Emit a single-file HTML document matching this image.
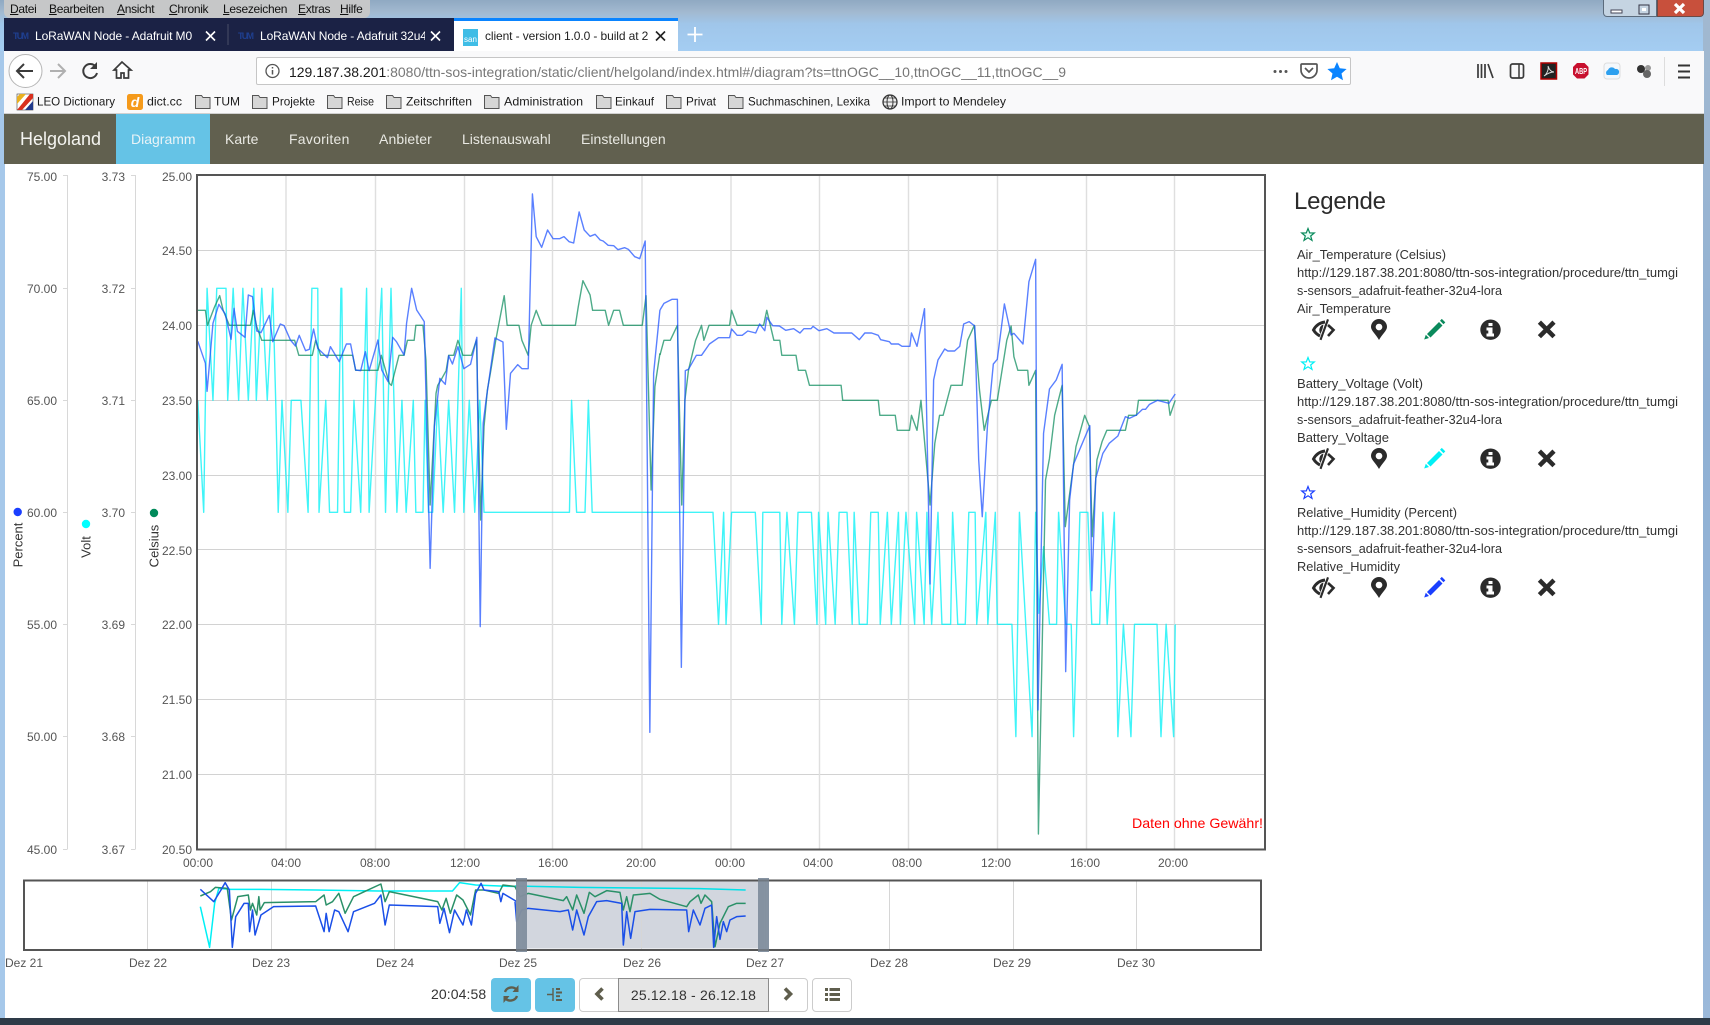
<!DOCTYPE html>
<html lang="de"><head><meta charset="utf-8"><title>client - version 1.0.0</title>
<style>
html,body{margin:0;padding:0;width:1710px;height:1025px;overflow:hidden;background:#a6cdf1;font-family:"Liberation Sans",sans-serif}
.a{position:absolute;white-space:nowrap}
#bg{left:0;top:0;width:1710px;height:51px;background:linear-gradient(180deg,#8fa9c2 0,#a2b9d0 12px,#a0c6ea 24px,#a4cdf2 51px)}
#menu{left:4px;top:0;width:366px;height:18px;background:#c6c7c8;border-radius:0 0 6px 6px}
.m{top:1px;font-size:12px;line-height:16px;color:#111;letter-spacing:-.3px}
.m u{text-decoration:underline}
#tabs{left:4px;top:18px;width:450px;height:33px;background:#1b2245}
#tabact{left:454px;top:18px;width:224px;height:33px;background:#fff;border-top:3px solid #0a84ff;box-sizing:border-box}
.t{top:28px;font-size:12px;line-height:16px;color:#fff;overflow:hidden;letter-spacing:-.1px}
#tool{left:4px;top:51px;width:1700px;height:62px;background:#f9f9fa}
#url{left:256px;top:57px;width:1095px;height:28px;background:#fff;border:1px solid #c6c6c6;border-radius:2px;box-sizing:border-box}
#nav{left:4px;top:114px;width:1700px;height:50px;background:#61604f}
.n{top:129px;font-size:14px;line-height:20px;color:#e9e9e3}
#page{left:5px;top:164px;width:1698px;height:854px;background:#fff}
#rs{left:1703px;top:0;width:7px;height:1025px;background:linear-gradient(180deg,#a2b9d0 0,#8fb0d4 40%,#9bb9da 100%)}
#ls{left:0;top:51px;width:5px;height:974px;background:#a6c8ea}
#bot{left:0;top:1018px;width:1710px;height:7px;background:#2e3b48}
.btn{height:34px;box-sizing:border-box;border-radius:4px}
svg{position:absolute;left:0;top:0}
</style></head><body>
<div class="a" id="bg"></div>
<div class="a" id="rs"></div><div class="a" id="ls"></div>
<div class="a" id="menu"></div>
<span class="a m" style="left:10px"><u>D</u>atei</span>
<span class="a m" style="left:49px"><u>B</u>earbeiten</span>
<span class="a m" style="left:117px"><u>A</u>nsicht</span>
<span class="a m" style="left:169px"><u>C</u>hronik</span>
<span class="a m" style="left:223px"><u>L</u>esezeichen</span>
<span class="a m" style="left:298px"><u>E</u>xtras</span>
<span class="a m" style="left:340px"><u>H</u>ilfe</span>
<div class="a" style="left:1603px;top:0;width:54px;height:17px;background:#c5d4e2;border:1px solid #5b6b7c;border-top:0;box-sizing:border-box;border-radius:0 0 0 4px"></div>
<div class="a" style="left:1657px;top:0;width:47px;height:17px;background:#c8503c;border:1px solid #6b4a46;border-top:0;box-sizing:border-box;border-radius:0 0 4px 0"></div>
<div class="a" id="tabs"></div>
<div class="a" id="tabact"></div>
<div class="a t" style="left:35px;width:162px">LoRaWAN Node - Adafruit M0</div>
<div class="a t" style="left:260px;width:165px">LoRaWAN Node - Adafruit 32u4</div>
<div class="a t" style="left:485px;width:165px;color:#222">client - version 1.0.0 - build at 2</div>
<div class="a" id="tool"></div>
<div class="a" id="url"></div>
<div class="a" style="left:4px;top:113px;width:1700px;height:1px;background:#d0d0d0"></div>
<div class="a" id="nav"></div>
<div class="a" style="left:116px;top:114px;width:94px;height:50px;background:#65c3e6"></div>
<a class="a" style="left:20px;top:128px;font-size:18px;line-height:22px;color:#f4f4f0">Helgoland</a>
<a class="a n" style="left:131px;color:#e8f3f7">Diagramm</a>
<a class="a n" style="left:225px">Karte</a>
<a class="a n" style="left:289px;letter-spacing:.25px">Favoriten</a>
<a class="a n" style="left:379px;letter-spacing:.1px">Anbieter</a>
<a class="a n" style="left:462px">Listenauswahl</a>
<a class="a n" style="left:581px;letter-spacing:.05px">Einstellungen</a>
<div class="a" id="page"></div>
<div class="a" id="bot"></div>
<div class="a" style="left:431px;top:985px;font-size:14px;line-height:18px;color:#333;letter-spacing:.1px">20:04:58</div>
<div class="a btn" style="left:491px;top:978px;width:40px;background:#65c3e6"></div>
<div class="a btn" style="left:535px;top:978px;width:40px;background:#65c3e6"></div>
<div class="a btn" style="left:579px;top:978px;width:229px;background:#fff;border:1px solid #ccc"></div>
<div class="a" style="left:618px;top:978px;width:151px;height:34px;box-sizing:border-box;background:#e6e6e6;border:1px solid #8c8c8c;text-align:center;font-size:14px;line-height:32px;color:#333;letter-spacing:.2px">25.12.18 - 26.12.18</div>
<div class="a btn" style="left:812px;top:978px;width:40px;background:#fff;border:1px solid #ccc"></div>

<svg width="1710" height="1025" viewBox="0 0 1710 1025" font-family="Liberation Sans, sans-serif">
<defs><clipPath id="cp"><rect x="198" y="176" width="1066" height="673"/></clipPath></defs>
<!-- window buttons -->
<rect x="1611" y="10" width="11" height="3" fill="#fff" stroke="#445"/><rect x="1639" y="5" width="10" height="9" fill="none" stroke="#334"/><rect x="1642" y="8" width="4" height="3" fill="#fff"/>
<path d="M1675 4l9 9M1684 4l-9 9" stroke="#fff" stroke-width="3.2"/>
<!-- tab favicons and closes -->
<text x="13" y="39" font-size="9" font-weight="bold" fill="#1f3f8f" textLength="16">TUM</text>
<text x="238" y="39" font-size="9" font-weight="bold" fill="#1f3f8f" textLength="16">TUM</text>
<rect x="463" y="29" width="15" height="17" fill="#3fbde6"/><text x="464" y="42" font-size="8" fill="#fff">san</text>
<path d="M206 31.500l9 9M215 31.500l-9 9M431 31.500l9 9M440 31.500l-9 9" stroke="#fff" stroke-width="1.6" fill="none"/>
<path d="M656 31.500l9 9M665 31.500l-9 9" stroke="#222" stroke-width="1.6" fill="none"/>
<path d="M228 24v21" stroke="#4a4f68"/>
<path d="M695 27v15M687.500 34.500h15" stroke="#fff" stroke-width="1.800"/>
<!-- toolbar left -->
<circle cx="25.500" cy="71" r="16.500" fill="#fff" stroke="#b5b5b5"/>
<path d="M33 71H18M24 64l-7 7 7 7" fill="none" stroke="#3b3b3b" stroke-width="2"/>
<path d="M65 71H50M58 64l7 7-7 7" fill="none" stroke="#b0b0b0" stroke-width="2"/>
<path d="M96 67a7 7 0 1 0 1 6" fill="none" stroke="#3b3b3b" stroke-width="2"/><path d="M97 62v7h-7z" fill="#3b3b3b"/>
<path d="M122 62l-8 8h2.500v8h4.500v-5h3v5h4.500v-8h2.500z" fill="#fff" stroke="#3b3b3b" stroke-width="1.700"/>
<circle cx="272.500" cy="71" r="6.500" fill="none" stroke="#555" stroke-width="1.300"/><path d="M272.500 70v4.500M272.500 67v1.500" stroke="#555" stroke-width="1.500"/>
<text x="289" y="77" font-size="14" textLength="777" lengthAdjust="spacingAndGlyphs" fill="#777"><tspan fill="#1a1a1a">129.187.38.201</tspan>:8080/ttn-sos-integration/static/client/helgoland/index.html#/diagram?ts=ttnOGC__10,ttnOGC__11,ttnOGC__9</text>
<circle cx="1275" cy="71.500" r="1.500" fill="#555"/><circle cx="1280.500" cy="71.500" r="1.500" fill="#555"/><circle cx="1286" cy="71.500" r="1.500" fill="#555"/>
<path d="M1302 64h14a1 1 0 0 1 1 1v5a8 8 0 0 1-16 0v-5a1 1 0 0 1 1-1z" fill="none" stroke="#555" stroke-width="1.700"/><path d="M1305 68l4 4 4-4" fill="none" stroke="#555" stroke-width="1.700"/>
<path d="M1337 62l2.800 6.300 6.800.7-5.100 4.500 1.500 6.700-6-3.500-6 3.500 1.500-6.700-5.100-4.500 6.800-.7z" fill="#0a84ff"/>
<!-- toolbar right -->
<path d="M1478 64v14M1481.500 64v14M1485 64v14M1488 64l5 14" stroke="#3b3b3b" stroke-width="1.700" fill="none"/>
<rect x="1510.500" y="64" width="13" height="14" rx="2" fill="none" stroke="#3b3b3b" stroke-width="1.700"/><path d="M1519 64v14" stroke="#3b3b3b" stroke-width="1.500"/>
<rect x="1541" y="63" width="15.500" height="16" fill="#222" stroke="#b00000" stroke-width="1.500"/><path d="M1544 76c3-2 5-7 4-10 1 3 3 6 6 6-3 0-6 1-10 4z" fill="none" stroke="#ddd" stroke-width="1"/>
<path d="M1577 63h7.500l4 4v7.500l-4 4H1577l-4-4V67z" fill="#c8102e"/><text x="1581" y="74" font-size="8" font-weight="bold" fill="#fff" text-anchor="middle" textLength="12" lengthAdjust="spacingAndGlyphs">ABP</text>
<rect x="1604" y="63" width="16" height="16" rx="3" fill="#f4f8fc" stroke="#ddd"/><path d="M1607 75a3 3 0 0 1 1-5 4 4 0 0 1 7-1 3 3 0 0 1 2 6z" fill="#2da0ef"/>
<circle cx="1641" cy="69" r="4" fill="#333"/><circle cx="1648" cy="68" r="3" fill="#999"/><circle cx="1647" cy="74" r="4" fill="#666"/>
<path d="M1664.500 57v29" stroke="#ddd"/>
<path d="M1678 65.500h12M1678 71.500h12M1678 77.500h12" stroke="#333" stroke-width="2"/>
<!-- bookmarks -->
<rect x="17" y="94" width="16" height="16" fill="#fff" stroke="#444" stroke-width=".6"/><path d="M17 110L30 94h3v4L22 110z" fill="#d9301f"/><path d="M25 110l8-9v9z" fill="#223a8c"/><path d="M20 94h6l-9 10v-7z" fill="#e9b020"/>
<g font-size="12" fill="#1c1c1c" lengthAdjust="spacingAndGlyphs">
<text x="37" y="105.500" textLength="78" lengthAdjust="spacingAndGlyphs">LEO Dictionary</text>
<text x="147" y="105.500" textLength="35" lengthAdjust="spacingAndGlyphs">dict.cc</text>
<text x="214" y="105.500" textLength="26" lengthAdjust="spacingAndGlyphs">TUM</text>
<text x="272" y="105.500" textLength="43" lengthAdjust="spacingAndGlyphs">Projekte</text>
<text x="347" y="105.500" textLength="27" lengthAdjust="spacingAndGlyphs">Reise</text>
<text x="406" y="105.500" textLength="66" lengthAdjust="spacingAndGlyphs">Zeitschriften</text>
<text x="504" y="105.500" textLength="79" lengthAdjust="spacingAndGlyphs">Administration</text>
<text x="615" y="105.500" textLength="39" lengthAdjust="spacingAndGlyphs">Einkauf</text>
<text x="686" y="105.500" textLength="30" lengthAdjust="spacingAndGlyphs">Privat</text>
<text x="748" y="105.500" textLength="122" lengthAdjust="spacingAndGlyphs">Suchmaschinen, Lexika</text>
<text x="901" y="105.500" textLength="105" lengthAdjust="spacingAndGlyphs">Import to Mendeley</text>
</g>
<rect x="127" y="94" width="16" height="16" rx="2.500" fill="#f59a1b"/><text x="135" y="107" font-size="14" font-weight="bold" font-style="italic" fill="#fff" text-anchor="middle">d</text>
<g fill="#d6d6d6" stroke="#555">
<path d="M195.500 95.500h6l1.500 2h7v11h-14.500z"/>
<path d="M252.500 95.500h6l1.500 2h7v11h-14.500z"/>
<path d="M327.500 95.500h6l1.500 2h7v11h-14.500z"/>
<path d="M386.500 95.500h6l1.500 2h7v11h-14.500z"/>
<path d="M484.500 95.500h6l1.500 2h7v11h-14.500z"/>
<path d="M596.500 95.500h6l1.500 2h7v11h-14.500z"/>
<path d="M666.500 95.500h6l1.500 2h7v11h-14.500z"/>
<path d="M728.500 95.500h6l1.500 2h7v11h-14.500z"/>
</g>
<circle cx="890" cy="102" r="7" fill="#eee" stroke="#333" stroke-width="1.300"/><ellipse cx="890" cy="102" rx="3" ry="7" fill="none" stroke="#333"/><path d="M883 102h14M884 98h12M884 106h12" stroke="#333" stroke-width=".8"/>

<!-- axes -->
<g stroke="#d8d8d8" fill="none">
<path d="M67.500 175v674M63 175.500h4.500M63 288.500h4.500M63 400.500h4.500M63 512.500h4.500M63 624.500h4.500M63 736.500h4.500M63 849.500h4.500"/>
<path d="M135.500 175v674M131 175.500h4.500M131 288.500h4.500M131 400.500h4.500M131 512.500h4.500M131 624.500h4.500M131 736.500h4.500M131 849.500h4.500"/>
</g>
<g font-size="12" fill="#555" text-anchor="end">
<text x="57" y="181">75.00</text><text x="57" y="293">70.00</text><text x="57" y="405">65.00</text><text x="57" y="517">60.00</text><text x="57" y="629">55.00</text><text x="57" y="741">50.00</text><text x="57" y="854">45.00</text>
<text x="125" y="181">3.73</text><text x="125" y="293">3.72</text><text x="125" y="405">3.71</text><text x="125" y="517">3.70</text><text x="125" y="629">3.69</text><text x="125" y="741">3.68</text><text x="125" y="854">3.67</text>
<text x="192" y="181">25.00</text><text x="192" y="255">24.50</text><text x="192" y="330">24.00</text><text x="192" y="405">23.50</text><text x="192" y="480">23.00</text><text x="192" y="555">22.50</text><text x="192" y="629">22.00</text><text x="192" y="704">21.50</text><text x="192" y="779">21.00</text><text x="192" y="854">20.50</text>
</g>
<circle cx="17.700" cy="512" r="4.200" fill="#1a3fff"/><circle cx="86" cy="524" r="4.200" fill="#00ffff"/><circle cx="154" cy="513" r="4.200" fill="#008a5a"/>
<g font-size="13" fill="#333" text-anchor="middle">
<text transform="translate(22.500,545) rotate(-90)">Percent</text>
<text transform="translate(90.500,547) rotate(-90)">Volt</text>
<text transform="translate(158.500,546) rotate(-90)">Celsius</text>
</g>
<!-- main chart grid -->
<g stroke="#d2d2d2" fill="none">
<path d="M198 250.500h1066M198 325.500h1066M198 400.500h1066M198 475.500h1066M198 549.500h1066M198 624.500h1066M198 699.500h1066M198 774.500h1066"/>
</g>
<g stroke="#dfdfdf" stroke-width="1.400" fill="none">
<path d="M286 176v673M375.500 176v673M464.500 176v673M552.500 176v673M642 176v673M731 176v673M819.500 176v673M908.500 176v673M997.500 176v673M1086.500 176v673M1174.500 176v673"/>
</g>
<g clip-path="url(#cp)" fill="none" stroke-width="1.400" stroke-linejoin="round">
<g transform="translate(0,160) scale(.42088,.33333)" stroke="#00f0f5" stroke-opacity=".75">
<polyline vector-effect="non-scaling-stroke" points="470,721 484,1057 492,385 506,721 515,385 537,385 541,721 554,385 567,721 577,385 590,721 603,385 609,721 622,385 635,721 648,385 655,721 661,1057 670,721 684,1057 692,721 715,721 732,1057 741,385 755,385 758,1057 774,721 783,1057 802,1057 810,385 812,385 818,1057 833,1057 841,721 857,1057 871,385 877,1057 907,385 916,1057 929,385 943,1057 955,721 965,1057 982,721 988,1057 1005,1057 1010,721 1018,1057 1028,1057 1040,721 1053,1057 1066,721 1080,1057 1096,385 1102,1057 1115,721 1128,1057 1140,721 1150,1057 1353,1057 1358,721 1370,1057 1390,1057 1398,721 1407,1057 1568,1057"/>
</g>
<g transform="translate(660,160) scale(.39541,.33333)" stroke="#00f0f5" stroke-opacity=".75">
<polyline vector-effect="non-scaling-stroke" points="0,1057 134,1057 148,1393 161,1057 167,1393 181,1057 241,1057 256,1393 260,1057 303,1057 308,1393 321,1057 340,1393 349,1057 383,1057 397,1393 401,1057 419,1393 425,1057 443,1393 453,1057 473,1057 486,1393 491,1057 504,1393 524,1393 533,1057 552,1057 557,1393 575,1057 585,1393 603,1057 608,1393 622,1057 644,1393 649,1057 668,1393 675,1057 687,1393 703,1057 713,1393 735,1393 740,1057 753,1393 772,1393 781,1057 797,1057 801,1393 824,1057 829,1393 848,1057 853,1393 890,1393 900,1730 909,1057 941,1730 950,1057 958,1360 970,1160 985,1393 1003,1393 1008,1057 1026,1393 1040,1393 1046,1730 1062,1057 1082,1057 1092,1393 1112,1393 1120,1057 1131,1393 1149,1057 1158,1730 1172,1393 1191,1730 1200,1393 1257,1393 1267,1730 1280,1393 1299,1730 1303,1393"/>
</g>
<g transform="translate(0,160) scale(.42088,.33333)" stroke="#0a8a5c" stroke-opacity=".72">
<polyline vector-effect="non-scaling-stroke" points="470,451 488,451 493,496 510,440 522,407 530,450 545,496 552,496 595,496 602,451 610,500 622,541 700,541 710,586 742,586 750,541 762,586 838,586 845,631 898,631 906,586 925,670 930,676 948,586 960,586 968,541 984,541 988,496 1005,496 1012,600 1022,1035 1036,700 1040,676 1050,655 1060,632 1066,586 1078,586 1088,541 1100,586 1120,586 1132,540 1142,1080 1150,800 1158,690 1165,640 1178,540 1198,407 1205,496 1233,496 1240,541 1255,586 1262,496 1274,451 1288,496 1367,496 1374,440 1385,362 1402,405 1408,451 1438,451 1446,496 1458,451 1472,451 1481,496 1526,496 1535,407 1547,990 1556,680 1568,580"/>
</g>
<g transform="translate(660,160) scale(.39541,.33333)" stroke="#0a8a5c" stroke-opacity=".72">
<polyline vector-effect="non-scaling-stroke" points="0,585 10,541 26,541 44,496 55,1035 63,720 72,631 90,541 105,496 111,541 124,496 176,496 181,451 195,496 262,496 270,451 288,541 303,541 308,586 344,586 350,631 368,631 378,676 458,676 462,721 552,721 556,766 595,766 600,811 631,811 636,766 650,811 660,721 683,1035 695,850 707,766 716,766 736,676 764,676 778,541 795,496 808,690 820,811 838,721 853,721 877,541 888,498 895,590 905,631 930,631 933,676 950,631 957,2022 975,960 985,895 998,766 1017,676 1025,1100 1035,1010 1052,860 1074,766 1086,800 1093,1130 1105,900 1118,845 1130,811 1177,811 1185,766 1205,766 1210,721 1285,721 1290,766 1303,721"/>
</g>
<g transform="translate(0,160) scale(.42088,.33333)" stroke="#1a4fff" stroke-opacity=".72">
<polyline vector-effect="non-scaling-stroke" points="470,544 488,610 492,694 506,490 520,433 535,462 549,538 556,445 564,514 582,532 590,405 600,410 610,513 620,518 640,466 648,545 666,492 675,497 690,540 702,558 711,526 726,572 735,568 745,507 755,565 778,593 785,560 806,605 823,552 833,552 845,630 857,632 868,575 877,632 898,540 907,630 922,665 933,532 942,545 960,585 966,490 978,385 990,450 1008,485 1012,700 1022,1225 1032,800 1045,655 1058,673 1066,587 1075,612 1088,560 1102,626 1118,613 1133,532 1141,1400 1148,790 1155,720 1176,534 1195,546 1203,808 1213,640 1230,614 1240,626 1255,626 1265,102 1274,230 1287,262 1301,210 1314,236 1330,236 1340,230 1352,245 1363,249 1376,156 1388,210 1402,229 1414,223 1426,240 1433,243 1445,256 1458,257 1468,269 1484,263 1493,268 1508,290 1520,296 1533,243 1544,1717 1553,640 1568,450"/>
</g>
<g transform="translate(660,160) scale(.39541,.33333)" stroke="#1a4fff" stroke-opacity=".72">
<polyline vector-effect="non-scaling-stroke" points="0,450 10,430 30,418 44,418 54,1522 64,632 72,628 92,586 105,586 125,552 148,533 176,533 181,507 195,526 208,526 222,513 242,519 252,492 265,512 270,472 285,497 302,498 318,511 338,506 354,519 364,506 382,506 387,499 402,512 422,506 440,519 485,519 504,539 518,519 535,519 552,526 558,539 580,545 585,552 603,552 612,559 632,559 636,519 650,559 669,446 683,1272 692,660 703,600 720,567 728,573 745,573 758,559 768,492 782,485 796,498 806,900 815,1070 828,800 843,612 853,598 871,432 888,525 895,520 918,552 933,365 950,298 956,1650 970,820 985,687 1002,660 1017,613 1026,1535 1036,1020 1046,912 1052,895 1087,797 1092,1292 1102,955 1120,880 1136,850 1158,828 1177,770 1187,775 1205,765 1220,748 1228,748 1238,733 1258,721 1287,730 1303,702"/>
</g>
</g>
<rect x="197" y="175" width="1068" height="674.500" fill="none" stroke="#555" stroke-width="2"/>
<text x="1263" y="828" font-size="14" fill="#f00" text-anchor="end" textLength="131" lengthAdjust="spacingAndGlyphs">Daten ohne Gewähr!</text>
<g font-size="12" fill="#555" text-anchor="middle">
<text x="198" y="867">00:00</text><text x="286" y="867">04:00</text><text x="375" y="867">08:00</text><text x="465" y="867">12:00</text><text x="553" y="867">16:00</text><text x="641" y="867">20:00</text><text x="730" y="867">00:00</text><text x="818" y="867">04:00</text><text x="907" y="867">08:00</text><text x="996" y="867">12:00</text><text x="1085" y="867">16:00</text><text x="1173" y="867">20:00</text>
</g>
<!-- overview -->
<rect x="522" y="881" width="242" height="67.500" fill="#d2d6de"/>
<path d="M147.500 881v68M271.500 881v68M394.500 881v68M518.500 881v68M641.500 881v68M765.500 881v68M889.500 881v68M1013.500 881v68M1136.500 881v68" stroke="#d6d6d6" fill="none"/>
<g fill="none" stroke-width="1.500" stroke-linejoin="round">
<g transform="translate(0,860) scale(.42088,.33333)">
<polyline vector-effect="non-scaling-stroke" stroke="#00f0f5" points="476,140 498,262 510,130 520,85 548,88 620,88 750,90 900,93 1075,93 1092,68 1130,75 1228,80"/>
<polyline vector-effect="non-scaling-stroke" stroke="#2a9068" points="476,108 500,95 512,82 540,85 550,180 565,110 590,105 595,150 600,130 610,165 615,110 618,150 628,128 750,125 770,105 775,135 790,125 805,100 820,160 840,110 905,72 915,125 925,95 1040,125 1050,150 1060,115 1070,160 1085,105 1100,120 1118,165 1130,90 1150,90 1185,100 1195,75 1228,80"/>
<polyline vector-effect="non-scaling-stroke" stroke="#1a4fe8" points="476,88 508,125 525,90 535,68 545,90 552,262 560,170 580,130 590,130 593,215 600,150 606,225 620,165 650,140 750,138 770,215 775,160 782,215 795,150 805,155 827,215 840,155 890,130 905,105 915,195 925,135 1040,140 1045,190 1055,145 1068,218 1080,150 1100,195 1108,150 1120,195 1130,100 1143,70 1150,90 1185,95 1190,125 1195,100 1228,125"/>
</g>
<g transform="translate(400,860) scale(.33333,.33333)">
<polyline vector-effect="non-scaling-stroke" stroke="#00e0e8" points="345,78 540,82 720,84 900,86 1037,90"/>
<polyline vector-effect="non-scaling-stroke" stroke="#2a9068" points="345,80 360,110 385,100 490,122 500,110 518,150 530,105 552,160 568,97 585,110 620,92 660,97 670,150 680,110 690,155 700,105 750,100 780,118 860,140 870,125 895,105 903,130 915,105 935,125 945,260 960,190 975,160 985,140 1010,130 1037,130"/>
<polyline vector-effect="non-scaling-stroke" stroke="#1a4fe8" points="345,125 350,185 365,150 385,145 480,155 505,150 518,210 530,150 552,225 565,170 590,125 620,122 665,130 670,255 680,155 692,235 705,155 750,148 860,150 866,215 880,150 900,195 915,145 935,135 941,262 950,170 960,238 970,185 980,215 990,180 1010,170 1037,168"/>
</g>
</g>
<rect x="516" y="878" width="11" height="74" fill="#82909f" fill-opacity=".92"/><rect x="758" y="878" width="11" height="74" fill="#82909f" fill-opacity=".92"/>
<rect x="24" y="880.500" width="1237" height="69.500" fill="none" stroke="#555" stroke-width="2"/>
<rect x="516" y="878" width="11" height="74" fill="#82909f" fill-opacity=".6"/><rect x="758" y="878" width="11" height="74" fill="#82909f" fill-opacity=".6"/>
<g font-size="12" fill="#555" text-anchor="middle">
<text x="24" y="967">Dez 21</text><text x="148" y="967">Dez 22</text><text x="271" y="967">Dez 23</text><text x="395" y="967">Dez 24</text><text x="518" y="967">Dez 25</text><text x="642" y="967">Dez 26</text><text x="765" y="967">Dez 27</text><text x="889" y="967">Dez 28</text><text x="1012" y="967">Dez 29</text><text x="1136" y="967">Dez 30</text>
</g>
<!-- button icons -->
<g fill="none" stroke="#5f5e4d">
<path d="M505 992a7 7 0 0 1 12-2M517 996a7 7 0 0 1-12 2" stroke-width="2.400"/><path d="M518.500 985v7h-6zM503.500 1003v-7h6z" fill="#5f5e4d" stroke="none"/>
<path d="M553 988v13M547 994.500h6.500" stroke-width="1.400"/><path d="M556 989h4M556 992.500h6M556 996.200h4M556 1000h6" stroke-width="1.900"/>
<path d="M602.500 988.500l-5.500 5.500 5.500 5.500" stroke-width="3.600"/>
<path d="M785 988.500l5.500 5.500-5.500 5.500" stroke-width="3.600"/>
<path d="M825 989.500h3M825 994.500h3M825 999.500h3M829.500 989.500h10.500M829.500 994.500h10.500M829.500 999.500h10.500" stroke-width="3"/>
</g>
<!-- legend -->
<text x="1294" y="209" font-size="24" fill="#2b2b2b" textLength="92">Legende</text>
<g font-size="13" fill="#333">
<text x="1297" y="259" textLength="149" lengthAdjust="spacingAndGlyphs">Air_Temperature (Celsius)</text>
<text x="1297" y="277" textLength="381" lengthAdjust="spacingAndGlyphs">http://129.187.38.201:8080/ttn-sos-integration/procedure/ttn_tumgi</text>
<text x="1297" y="295" textLength="205" lengthAdjust="spacingAndGlyphs">s-sensors_adafruit-feather-32u4-lora</text>
<text x="1297" y="313" textLength="94" lengthAdjust="spacingAndGlyphs">Air_Temperature</text>
<text x="1297" y="388" textLength="126" lengthAdjust="spacingAndGlyphs">Battery_Voltage (Volt)</text>
<text x="1297" y="406" textLength="381" lengthAdjust="spacingAndGlyphs">http://129.187.38.201:8080/ttn-sos-integration/procedure/ttn_tumgi</text>
<text x="1297" y="424" textLength="205" lengthAdjust="spacingAndGlyphs">s-sensors_adafruit-feather-32u4-lora</text>
<text x="1297" y="442" textLength="92" lengthAdjust="spacingAndGlyphs">Battery_Voltage</text>
<text x="1297" y="517" textLength="160" lengthAdjust="spacingAndGlyphs">Relative_Humidity (Percent)</text>
<text x="1297" y="535" textLength="381" lengthAdjust="spacingAndGlyphs">http://129.187.38.201:8080/ttn-sos-integration/procedure/ttn_tumgi</text>
<text x="1297" y="553" textLength="205" lengthAdjust="spacingAndGlyphs">s-sensors_adafruit-feather-32u4-lora</text>
<text x="1297" y="571" textLength="103" lengthAdjust="spacingAndGlyphs">Relative_Humidity</text>
</g>
<!-- stars -->
<path transform="translate(1308,235)" d="M0-6.500L1.700-2.100 6.300-2 2.700 1 4 5.400 0 2.800 -4 5.400 -2.700 1 -6.300-2 -1.700-2.100z" fill="#e6fff6" stroke="#0a8a5c" stroke-width="1.200"/>
<path transform="translate(1308,364)" d="M0-6.500L1.700-2.100 6.300-2 2.700 1 4 5.400 0 2.800 -4 5.400 -2.700 1 -6.300-2 -1.700-2.100z" fill="#fff" stroke="#00f0f5" stroke-width="1.200"/>
<path transform="translate(1308,493)" d="M0-6.500L1.700-2.100 6.300-2 2.700 1 4 5.400 0 2.800 -4 5.400 -2.700 1 -6.300-2 -1.700-2.100z" fill="#fff" stroke="#1a3fff" stroke-width="1.200"/>
<!-- row 1 icons -->
<g transform="translate(0,329.500)" fill="#2b2b2b">
<path d="M1325-7.500C1319.500-7 1315.500-3.500 1313.500 0.500 1315 3 1317 5 1320 6.500" fill="none" stroke="#2b2b2b" stroke-width="3"/><path d="M1323.500-5C1319.500-4 1318 1 1320.500 4.500L1322.500-.5z"/><path d="M1327-10.500l2 .7-7.500 20.500-2-.7z"/><path d="M1328-4.500l5.500 5-5.500 6" fill="none" stroke="#2b2b2b" stroke-width="2.600"/>
<path fill-rule="evenodd" d="M1379 10.500C1376 5 1371 1 1371-2.500a8 8 0 0 1 16 0C1387 1 1382 5 1379 10.500zM1379-5.800a3.300 3.300 0 1 0 .01 0z"/>
<path d="M1424.200 10l1.600-4.700 3.200 3.200z" fill="#0a8a5c"/><path d="M1427 4.500l12-12 3.500 3.500-12 12z" fill="#0a8a5c"/><path d="M1440-8.800l1.800-1.800 3.500 3.500-1.800 1.800z" fill="#0a8a5c"/>
<path fill-rule="evenodd" d="M1490.500-10a10.200 10.200 0 1 0 .01 0zM1488.500-6.500h4v3h-4zM1486.500-2h6v6h1.500v3h-7.500v-3h1.800v-3h-1.800z"/>
<path d="M1541-9l5.700 5.700 5.700-5.700 3.200 3.200-5.700 5.700 5.700 5.700-3.200 3.200-5.700-5.700-5.700 5.700-3.200-3.200 5.700-5.700-5.700-5.700z"/>
</g>
<!-- row 2 icons -->
<g transform="translate(0,458.500)" fill="#2b2b2b">
<path d="M1325-7.500C1319.500-7 1315.500-3.500 1313.500 0.500 1315 3 1317 5 1320 6.500" fill="none" stroke="#2b2b2b" stroke-width="3"/><path d="M1323.500-5C1319.500-4 1318 1 1320.500 4.500L1322.500-.5z"/><path d="M1327-10.500l2 .7-7.500 20.500-2-.7z"/><path d="M1328-4.500l5.500 5-5.500 6" fill="none" stroke="#2b2b2b" stroke-width="2.600"/>
<path fill-rule="evenodd" d="M1379 10.500C1376 5 1371 1 1371-2.500a8 8 0 0 1 16 0C1387 1 1382 5 1379 10.500zM1379-5.800a3.300 3.300 0 1 0 .01 0z"/>
<path d="M1424.200 10l1.600-4.700 3.200 3.200z" fill="#00f0f5"/><path d="M1427 4.500l12-12 3.500 3.500-12 12z" fill="#00f0f5"/><path d="M1440-8.800l1.800-1.800 3.500 3.500-1.800 1.800z" fill="#00f0f5"/>
<path fill-rule="evenodd" d="M1490.500-10a10.200 10.200 0 1 0 .01 0zM1488.500-6.500h4v3h-4zM1486.500-2h6v6h1.500v3h-7.500v-3h1.800v-3h-1.800z"/>
<path d="M1541-9l5.700 5.700 5.700-5.700 3.200 3.200-5.700 5.700 5.700 5.700-3.200 3.200-5.700-5.700-5.700 5.700-3.200-3.200 5.700-5.700-5.700-5.700z"/>
</g>
<!-- row 3 icons -->
<g transform="translate(0,587.500)" fill="#2b2b2b">
<path d="M1325-7.500C1319.500-7 1315.500-3.500 1313.500 0.500 1315 3 1317 5 1320 6.500" fill="none" stroke="#2b2b2b" stroke-width="3"/><path d="M1323.500-5C1319.500-4 1318 1 1320.500 4.500L1322.500-.5z"/><path d="M1327-10.500l2 .7-7.500 20.500-2-.7z"/><path d="M1328-4.500l5.500 5-5.500 6" fill="none" stroke="#2b2b2b" stroke-width="2.600"/>
<path fill-rule="evenodd" d="M1379 10.500C1376 5 1371 1 1371-2.500a8 8 0 0 1 16 0C1387 1 1382 5 1379 10.500zM1379-5.800a3.300 3.300 0 1 0 .01 0z"/>
<path d="M1424.200 10l1.600-4.700 3.200 3.200z" fill="#1a3fff"/><path d="M1427 4.500l12-12 3.500 3.500-12 12z" fill="#1a3fff"/><path d="M1440-8.800l1.800-1.800 3.500 3.500-1.800 1.800z" fill="#1a3fff"/>
<path fill-rule="evenodd" d="M1490.500-10a10.200 10.200 0 1 0 .01 0zM1488.500-6.500h4v3h-4zM1486.500-2h6v6h1.500v3h-7.500v-3h1.800v-3h-1.800z"/>
<path d="M1541-9l5.700 5.700 5.700-5.700 3.200 3.200-5.700 5.700 5.700 5.700-3.200 3.200-5.700-5.700-5.700 5.700-3.200-3.200 5.700-5.700-5.700-5.700z"/>
</g>
</svg>
</body></html>
